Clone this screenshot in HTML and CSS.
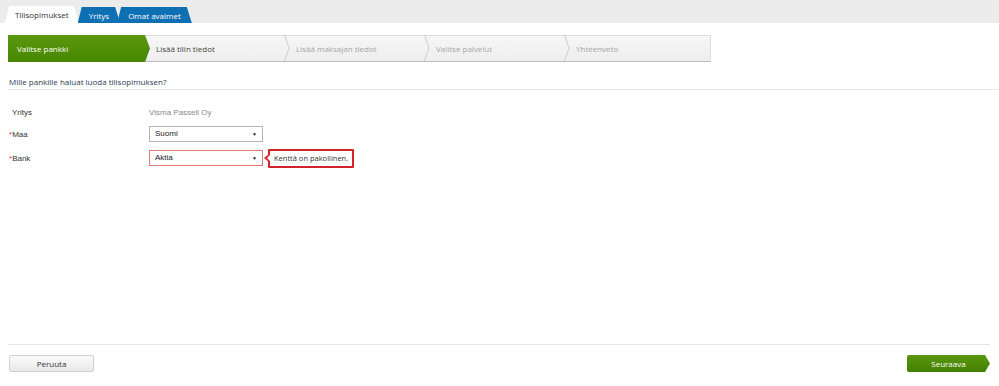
FILE: index.html
```html
<!DOCTYPE html>
<html lang="fi">
<head>
  <meta charset="UTF-8">
  <meta name="viewport" content="width=device-width, initial-scale=1.0">
  <title>Tilisopimukset</title>
  <link rel="stylesheet" href="styles.css">
</head>
<body>
  <div class="page">
    <div class="topbar">
      <div class="tab active">Tilisopimukset</div>
      <div class="tab">Yritys</div>
      <div class="tab">Omat avaimet</div>
    </div>

    <div class="content">
      <div class="steps">
        <div class="step current">Valitse pankki</div>
        <div class="step next">
          <span>Lisää tilin tiedot</span>
          <svg class="chevron" width="6" height="26" viewBox="0 0 6 26"><polyline points="0.5,0 5,13 0.5,26" fill="none" stroke="#cfcfcf" stroke-width="1"/></svg>
        </div>
        <div class="step">
          <span>Lisää maksajan tiedot</span>
          <svg class="chevron" width="6" height="26" viewBox="0 0 6 26"><polyline points="0.5,0 5,13 0.5,26" fill="none" stroke="#cfcfcf" stroke-width="1"/></svg>
        </div>
        <div class="step">
          <span>Valitse palvelut</span>
          <svg class="chevron" width="6" height="26" viewBox="0 0 6 26"><polyline points="0.5,0 5,13 0.5,26" fill="none" stroke="#cfcfcf" stroke-width="1"/></svg>
        </div>
        <div class="step last">Yhteenveto</div>
      </div>

      <h1 class="heading">Mille pankille haluat luoda tilisopimuksen?</h1>

      <div class="form">
        <div class="row">
          <div class="label plain">Yritys</div>
          <div class="value">Visma Passeli Oy</div>
        </div>
        <div class="row">
          <div class="label"><span class="req">*</span>Maa</div>
          <div class="select">Suomi<span class="arrow">▼</span></div>
        </div>
        <div class="row">
          <div class="label"><span class="req">*</span>Bank</div>
          <div class="select invalid">Aktia<span class="arrow">▼</span></div>
          <div class="error">Kenttä on pakollinen.</div>
        </div>
      </div>
    </div>

    <div class="footer">
      <button class="btn cancel">Peruuta</button>
      <button class="btn next-btn">Seuraava</button>
    </div>
  </div>
</body>
</html>
```

FILE: styles.css
```css
body {
  margin: 0;
  font-family: "Open Sans", Arial, sans-serif;
  font-size: 8px;
  color: #333;
  background-color: #fff;
}
.page {
  display: flex;
  flex-direction: column;
  height: 100vh;
}
.topbar {
  height: 23px;
  background-color: #ececec;
  display: flex;
  align-items: flex-end;
  padding-left: 5px;
}
.tab {
  height: 16px;
  line-height: 17px;
  padding: 0 11px 0 11px;
  margin-right: -3px;
  background-color: #0f6fb3;
  color: #fff;
  border-radius: 4px 4px 0 0;
  clip-path: polygon(4px 0, calc(100% - 5px) 0, 100% 100%, 0 100%);
}
.tab.active {
  height: 17px;
  line-height: 18px;
  padding: 0 10px;
  background-color: #fff;
  color: #333;
  margin-right: -1px;
  clip-path: polygon(4px 0, calc(100% - 5px) 0, 100% 100%, 0 100%);
}
.content {
  flex: 1;
  padding-left: 8px;
}
.steps {
  margin-top: 12px;
  width: 701px;
  height: 25px;
  display: flex;
  background: linear-gradient(#f6f6f6, #eeeeee);
  border: 1px solid #dcdcdc;
  border-bottom-color: #bdbdbd;
}
.step {
  width: 140px;
  display: flex;
  align-items: center;
  padding-left: 6px;
  box-sizing: border-box;
  color: #a5a5a5;
}
.step span {
  flex: 1;
}
.step .chevron {
  margin-top: -1px;
  flex-shrink: 0;
}
.step.current {
  width: 142px;
  margin: -1px 0 -1px -1px;
  padding-left: 9px;
  color: #fff;
  background: linear-gradient(#5a980f, #478600);
  clip-path: polygon(0 0, calc(100% - 5px) 0, 100% 50%, calc(100% - 5px) 100%, 0 100%);
}
.step.next {
  color: #444;
}
.step.last {
  flex: 1;
}
.heading {
  margin: 14px 0 0 0;
  padding: 0 0 2px 1px;
  font-size: 8px;
  font-weight: normal;
  color: #2b3a4c;
  border-bottom: 1px solid #e6e6e6;
}
.form {
  padding-top: 12px;
}
.row {
  display: flex;
  align-items: center;
  height: 20px;
  font-family: "Liberation Sans", Arial, sans-serif;
}
.row:nth-child(1) {
  margin-bottom: 2px;
}
.row:nth-child(2) {
  margin-bottom: 4px;
}
.label {
  width: 140px;
  padding-left: 1px;
  color: #333;
}
.label.plain {
  padding-left: 4px;
  width: 137px;
}
.req {
  color: #e03a3a;
}
.value {
  color: #8a8a8a;
}
.select {
  width: 102px;
  height: 14px;
  line-height: 14px;
  padding: 0 5px;
  border: 1px solid #b5b5b5;
  background-color: #fff;
  display: flex;
  justify-content: space-between;
  color: #222;
}
.select .arrow {
  font-size: 5px;
}
.select.invalid {
  border-color: #e27a7a;
}
.error {
  position: relative;
  margin-left: 5px;
  height: 15px;
  line-height: 15px;
  padding: 0 4px;
  border: 2px solid #d2232a;
  border-radius: 1px;
  font-family: "Open Sans", Arial, sans-serif;
  font-size: 7.5px;
  color: #333;
  background-color: #fff;
}
.error::before {
  content: '';
  position: absolute;
  left: -6px;
  top: 3px;
  border-top: 4px solid transparent;
  border-bottom: 4px solid transparent;
  border-right: 5px solid #d2232a;
}
.error::after {
  content: '';
  position: absolute;
  left: -3px;
  top: 4px;
  border-top: 3px solid transparent;
  border-bottom: 3px solid transparent;
  border-right: 3px solid #fff;
}
.footer {
  margin: 0 9px 0 8px;
  border-top: 1px solid #e6e6e6;
  padding: 10px 0 14px 1px;
  display: flex;
  justify-content: space-between;
}
.btn {
  height: 17px;
  font-family: "Open Sans", Arial, sans-serif;
  font-size: 8px;
  cursor: pointer;
  padding: 0;
}
.btn.cancel {
  width: 85px;
  color: #333;
  background: linear-gradient(#fafafa, #e9e9e9);
  border: 1px solid #cfcfcf;
  border-radius: 2px;
}
.btn.next-btn {
  width: 83px;
  color: #fff;
  border: none;
  border-radius: 2px 0 0 2px;
  background: linear-gradient(#5a980f, #437f00);
  clip-path: polygon(0 0, calc(100% - 5px) 0, 100% 50%, calc(100% - 5px) 100%, 0 100%);
}
```
